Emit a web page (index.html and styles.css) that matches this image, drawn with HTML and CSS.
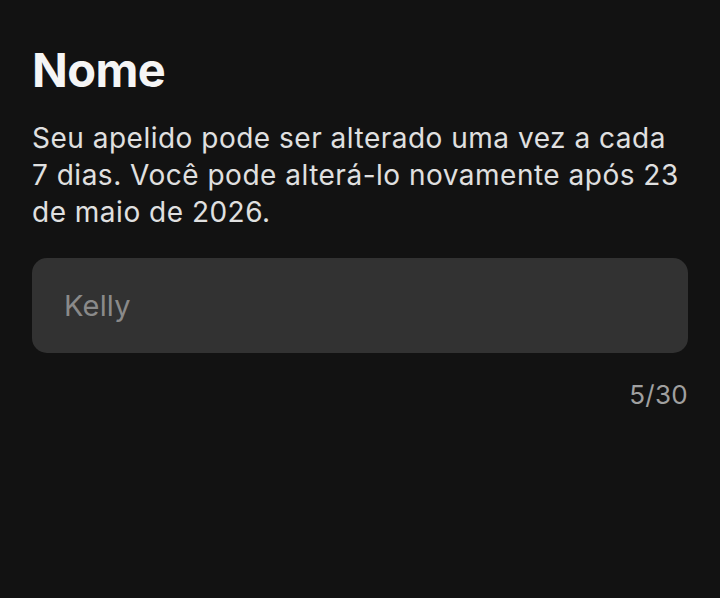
FILE: index.html
```html
<!DOCTYPE html>
<html lang="pt">
<head>
<meta charset="utf-8">
<link rel="stylesheet" href="styles.css">
</head>
<body>
<main class="page">
  <h1 class="title">Nome</h1>
  <p class="desc">Seu apelido pode ser alterado uma vez a cada 7 dias. Você pode alterá-lo novamente após 23 de maio de 2026.</p>
  <div class="field"><span class="value">Kelly</span></div>
  <div class="counter">5/30</div>
</main>
</body>
</html>
```
FILE: styles.css
```css
html, body {
  margin: 0;
  padding: 0;
  background: #121212;
  height: 100%;
}
body {
  font-family: Inter, "Noto Sans", sans-serif;
  color: #e6e6e6;
}
.page {
  padding: 41px 32px 0 32px;
  display: flex;
  flex-direction: column;
}
.title {
  margin: 0;
  font-size: 47px;
  font-weight: 700;
  color: #f5f5f5;
  line-height: 58px;
  letter-spacing: -0.6px;
}
.desc {
  margin: 21px 0 0 0;
  max-width: 650px;
  font-size: 28px;
  line-height: 37px;
  letter-spacing: 0.5px;
  color: #e0e0e0;
  font-weight: 400;
}
.field {
  margin-top: 27px;
  height: 95px;
  background: #323232;
  border-radius: 15px;
  display: flex;
  align-items: center;
  padding: 0 32px;
}
.value {
  font-size: 29px;
  letter-spacing: 0.2px;
  color: #8a8a8a;
}
.counter {
  margin-top: 26px;
  align-self: flex-end;
  font-size: 26px;
  letter-spacing: 0.3px;
  color: #a0a0a0;
}
```
